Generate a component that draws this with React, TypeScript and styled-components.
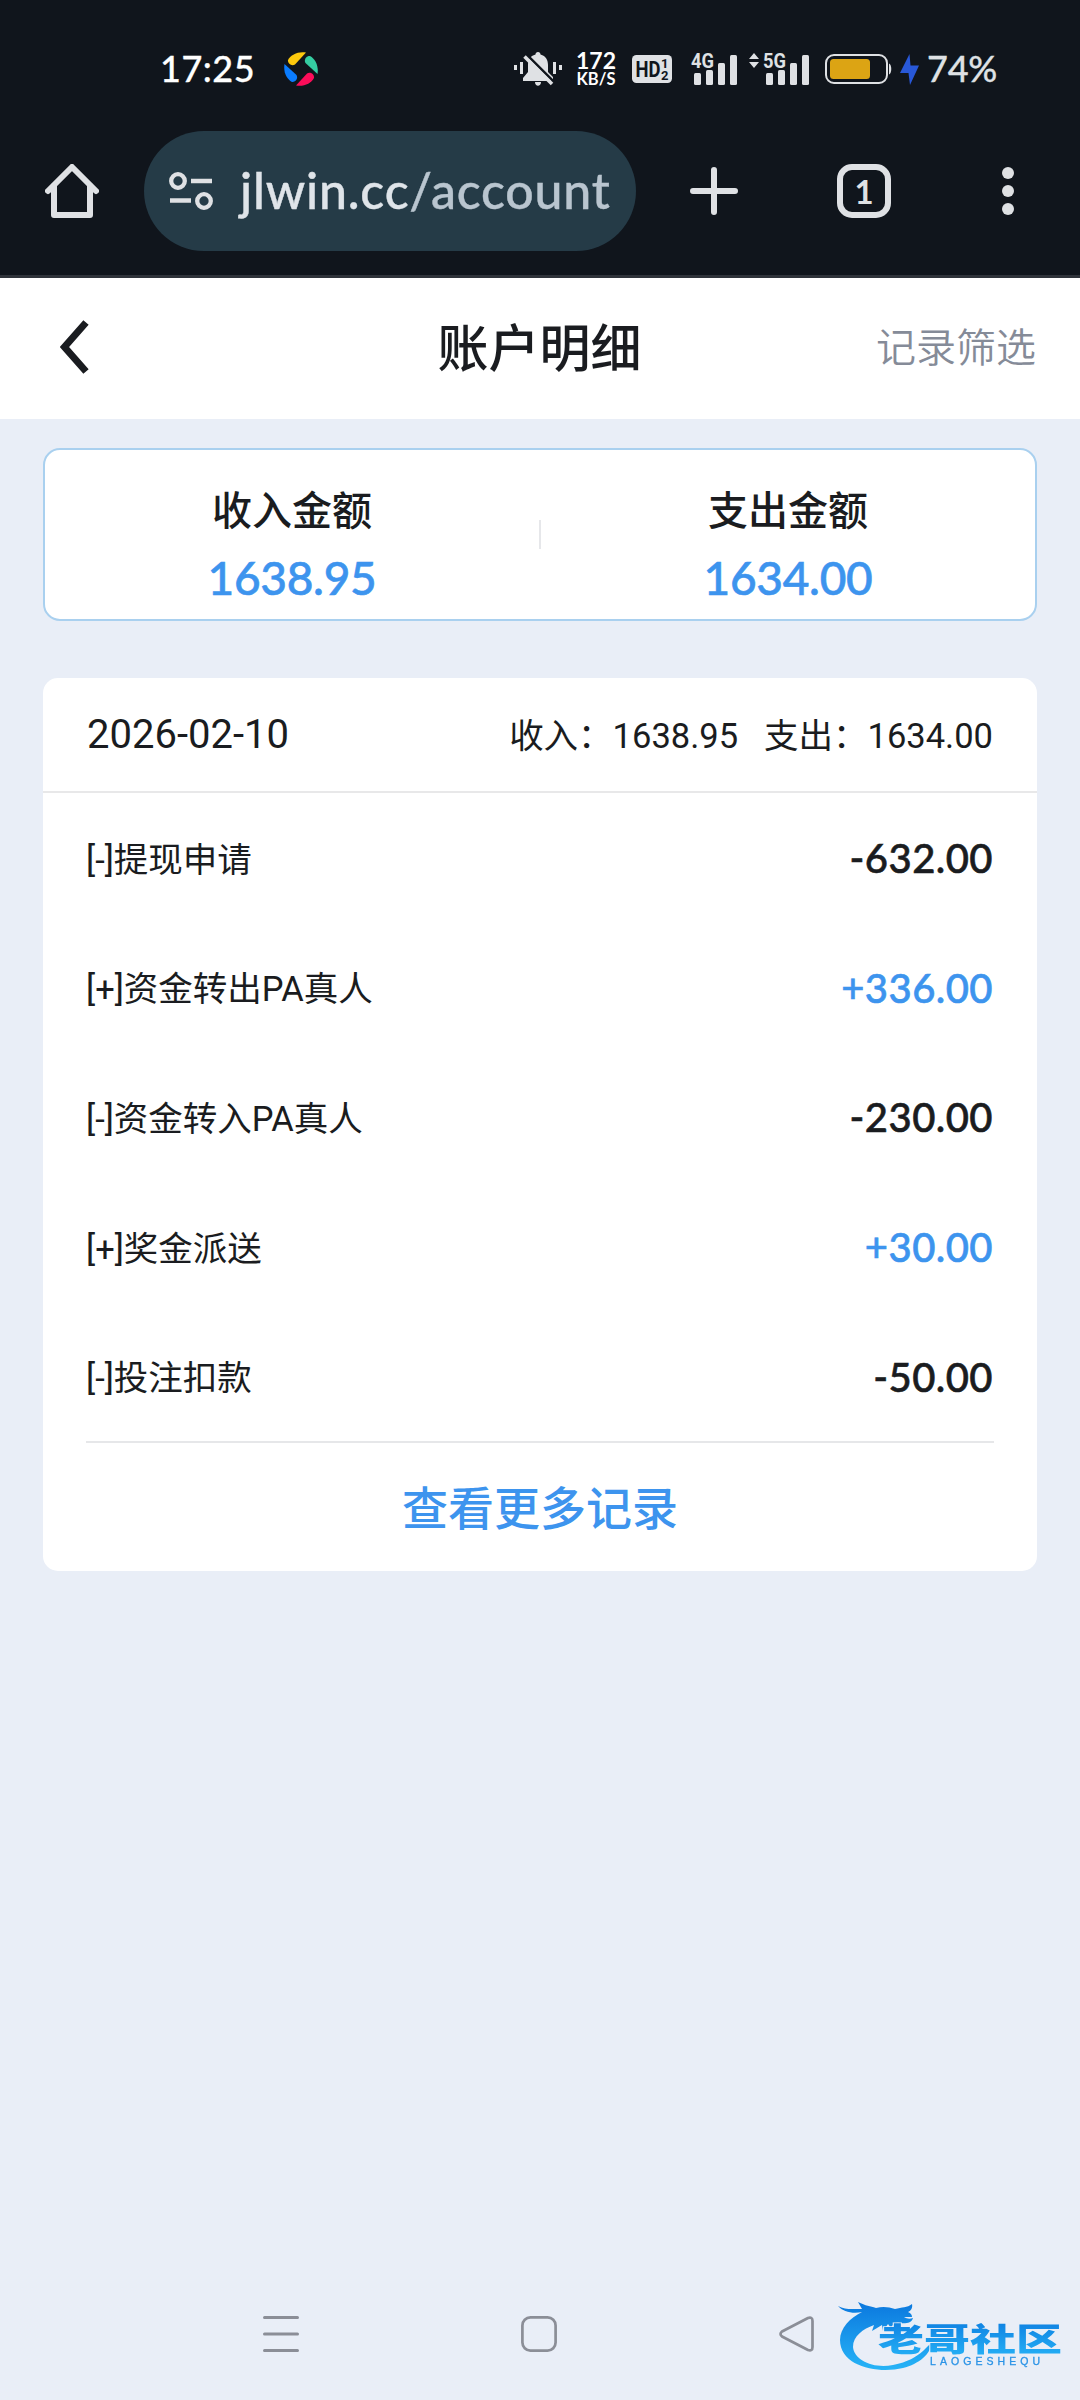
import React from "react";
import styled, { createGlobalStyle } from "styled-components";

const latin = `Lato, "Noto Sans CJK SC", sans-serif`;
const body = `Roboto, "Noto Sans CJK SC", sans-serif`;
const ink = "#1a1c20";
const blue = "#3d94ee";
const light = "#dfe1e4";

const GlobalStyle = createGlobalStyle`
  * { box-sizing: border-box; }
  body { margin: 0; background: #e9eef7; }
`;

const Screen = styled.div`
  position: relative;
  width: 1080px;
  height: 2400px;
  display: flex;
  flex-direction: column;
  background: #e9eef7;
  color: ${ink};
  font-family: ${body};
  overflow: hidden;
  white-space: nowrap;
`;

const BrowserChrome = styled.header`
  height: 278px;
  background: #10151c;
  border-bottom: 3px solid #2f333a;
  display: flex;
  flex-direction: column;
`;

const StatusBar = styled.div`
  height: 131px;
  padding: 7px 81px 0 160px;
  display: flex;
  align-items: center;
  color: ${light};
  font-family: ${latin};
`;

const Clock = styled.span`
  width: 124px;
  padding-bottom: 2px;
  font-size: 36px;
  font-weight: 500;
  letter-spacing: 0.5px;
  color: #fff;
  -webkit-text-stroke: 0.3px currentColor;
`;

const StatusIcons = styled.div`
  margin-left: auto;
  display: flex;
  align-items: center;
`;

const NetSpeed = styled.div`
  width: 40px;
  margin: 0 16px 0 14px;
  display: flex;
  flex-direction: column;
  align-items: center;
  color: #fff;
  font-weight: 700;
`;

const SpeedValue = styled.span`
  font-size: 23px;
  line-height: 20px;
`;

const SpeedUnit = styled.span`
  font-size: 16.5px;
  line-height: 18px;
`;

const Percent = styled.span`
  width: 72px;
  margin-left: 8px;
  padding-bottom: 2px;
  font-size: 36px;
  font-weight: 500;
  letter-spacing: -0.2px;
  -webkit-text-stroke: 0.3px currentColor;
`;

const Toolbar = styled.div`
  height: 120px;
  padding: 0 66px 0 45px;
  display: flex;
  align-items: center;
`;

const AddressPill = styled.div`
  width: 492px;
  height: 120px;
  margin: 0 54px 0 45px;
  padding-left: 24px;
  border-radius: 60px;
  background: #253b47;
  display: flex;
  align-items: center;
`;

const Url = styled.span`
  margin-left: 26px;
  padding-bottom: 2px;
  font-family: ${latin};
  font-size: 50px;
  font-weight: 500;
  letter-spacing: 0.8px;
  line-height: 60px;
  color: #dfe4e9;
  -webkit-text-stroke: 0.4px currentColor;
`;

const UrlPath = styled.span`
  color: #b9c5cf;
`;

const TabCount = styled.div`
  width: 54px;
  height: 54px;
  margin: 0 111px 0 99px;
  border: 6px solid ${light};
  border-radius: 15px;
  display: flex;
  align-items: center;
  justify-content: center;
  font: 700 33px/42px ${latin};
  color: ${light};
`;

const PageHeader = styled.div`
  height: 141px;
  padding: 0 44px 0 60px;
  background: #fff;
  display: grid;
  grid-template-columns: 1fr auto 1fr;
  align-items: center;
`;

const BackIcon = styled.svg`
  margin-bottom: 3px;
`;

const Title = styled.h1`
  margin: 2px 0 0 -17px;
  font-size: 51px;
  font-weight: 500;
  line-height: 60px;
`;

const FilterLink = styled.span`
  justify-self: end;
  font-size: 40px;
  font-weight: 350;
  line-height: 48px;
  color: #858b98;
`;

const Content = styled.main`
  flex: 1;
  padding: 29px 43px 0;
  display: flex;
  flex-direction: column;
  gap: 57px;
`;

const Summary = styled.section`
  height: 173px;
  border: 2px solid #a9d0ef;
  border-radius: 17px;
  background: #fff;
  display: grid;
  grid-template-columns: 1fr 2px 1fr;
  align-items: center;
`;

const Total = styled.div`
  height: 100%;
  padding-top: 32px;
  display: flex;
  flex-direction: column;
  align-items: center;
`;

const TotalLabel = styled.span`
  font-size: 40px;
  font-weight: 500;
  line-height: 60px;
`;

const TotalValue = styled.span`
  margin-top: 8px;
  font: 500 46px/56px ${latin};
  letter-spacing: -0.3px;
  color: ${blue};
  -webkit-text-stroke: 0.6px currentColor;
`;

const Divider = styled.i`
  width: 2px;
  height: 29px;
  background: #e6e7ea;
`;

const Records = styled.section`
  height: 893px;
  border-radius: 15px;
  background: #fff;
`;

const DayHeader = styled.div`
  height: 115px;
  padding: 0 43px 0 44px;
  border-bottom: 2px solid #e8e8e9;
  display: flex;
  align-items: center;
  justify-content: space-between;
  font-size: 40px;
`;

const DayTotals = styled.div`
  padding: 0 1px 4px 0;
  display: flex;
  gap: 26px;
  font-size: 34.5px;
`;

const RecordList = styled.div`
  margin: 0 43px;
  border-bottom: 2px solid #e6e7e9;
`;

const Record = styled.div`
  height: 129.6px;
  padding-right: 1px;
  display: flex;
  align-items: center;
  justify-content: space-between;
  font-size: 34.5px;
`;

const RecordLabel = styled.span`
  padding-bottom: 2px;
`;

const Amount = styled.span<{ $income: boolean }>`
  padding-top: 1px;
  font: 500 40px/48px ${latin};
  letter-spacing: 0.45px;
  color: ${(p) => (p.$income ? blue : ink)};
  -webkit-text-stroke: 0.6px currentColor;
`;

const More = styled.div`
  height: 128px;
  padding-bottom: 4px;
  display: flex;
  align-items: center;
  justify-content: center;
  font-size: 46px;
  font-weight: 500;
  color: ${blue};
`;

const SystemNav = styled.nav`
  height: 132px;
  padding: 0 266px 0 263px;
  display: flex;
  align-items: center;
  justify-content: space-between;
`;

const Watermark = styled.svg`
  position: absolute;
  left: 832px;
  top: 2292px;
  filter: blur(0.6px);
`;

const records = [
  { label: "[-]提现申请", amount: "-632.00" },
  { label: "[+]资金转出PA真人", amount: "+336.00" },
  { label: "[-]资金转入PA真人", amount: "-230.00" },
  { label: "[+]奖金派送", amount: "+30.00" },
  { label: "[-]投注扣款", amount: "-50.00" },
];

const AppBadge = () => (
  <svg width="34" height="34" viewBox="0 0 34 34">
    <path d="M22 .5C14-.8 7 2.500 4 8c-.5 3.500 3.500 6.500 7 4.500Z" fill="#fdc90d" />
    <path d="M33.500 22C34.800 14 31.500 7 26 4c-3.500-.5-6.500 3.500-4.500 7Z" fill="#35cda2" />
    <path d="M12 33.500C20 34.800 27 31.500 30 26c.5-3.500-3.500-6.500-7-4.500Z" fill="#fb0d59" />
    <path d="M.5 12C-.8 20 2.500 27 8 30c3.500.5 6.500-3.500 4.500-7Z" fill="#0a7cff" />
  </svg>
);

const MutedBell = () => (
  <svg width="48" height="34" viewBox="0 0 48 34" fill={light}>
    <path d="M0 13h3v5H0zM6 10h3v12H6zM39 10h3v12h-3zM45 13h3v5h-3z" />
    <path d="M24 0c1.500 0 2.500 1 2.500 2.500C32 4 34 8 34 13v7l5 5v4H9v-3l5-6v-7c0-5 2-9 7.500-10.500C21.500 1 22.500 0 24 0ZM21 30h6c0 5-6 5-6 0Z" />
    <path d="M12.500 2.500 40 30" stroke="#10151c" strokeWidth="2.500" />
    <path d="M10.500 4.500 38 32" stroke={light} strokeWidth="3.500" />
  </svg>
);

const HdBadge = () => (
  <svg width="40" height="28" viewBox="0 0 40 28">
    <rect width="40" height="28" rx="4.500" fill={light} />
    <g fill="#10151c" fontFamily="Roboto, sans-serif" fontWeight="700">
      <text x="3.500" y="22" fontSize="22" textLength="25" lengthAdjust="spacingAndGlyphs">HD</text>
      <text x="29" y="13" fontSize="13">1</text>
      <text x="29" y="25" fontSize="13">2</text>
    </g>
  </svg>
);

const SignalIcon = styled.svg`
  overflow: visible;
`;

const Signal = ({ label, arrows }: { label: string; arrows?: boolean }) => (
  <SignalIcon width={arrows ? 60 : 46} height="38" viewBox={arrows ? "-14 -2 60 38" : "0 -2 46 38"} fill={light}>
    {arrows && <path d="m-14 7 5-6 5 6ZM-14 10h10l-5 6Z" />}
    <text x="0" y="16" fontFamily="Roboto, sans-serif" fontWeight="700" fontSize="21" textLength="23" lengthAdjust="spacingAndGlyphs">
      {label}
    </text>
    <rect x="3" y="21" width="7" height="12" rx="1.500" />
    <rect x="15" y="18" width="7" height="15" rx="1.500" />
    <rect x="27" y="11" width="7" height="22" rx="1.500" />
    <rect x="39" y="3" width="7" height="30" rx="1.500" />
  </SignalIcon>
);

const Battery = () => (
  <svg width="67" height="30" viewBox="0 0 67 30">
    <rect x="1" y="1" width="61" height="28" rx="8" fill="none" stroke={light} strokeWidth="2" />
    <rect x="5" y="5" width="40" height="20" rx="3.500" fill="#dca414" />
    <path d="M64 9.500c3 1 3 10 0 11Z" fill={light} />
  </svg>
);

const Bolt = () => (
  <svg width="19" height="31" viewBox="0 0 19 31" fill="#2858d8">
    <path d="M9.500 0 0 19h8.500L10 31l9-19.500h-8.500Z" />
  </svg>
);

const Home = () => (
  <svg width="54" height="54" viewBox="0 0 54 54" fill="none" stroke={light} strokeWidth="6" strokeLinejoin="round" strokeLinecap="round">
    <path d="M3 27 27 3l24 24" />
    <path d="M9 22v29h36V22" />
  </svg>
);

const SiteSettings = () => (
  <svg width="46" height="38" viewBox="0 0 46 38" fill="none" stroke={light}>
    <circle cx="10" cy="9" r="6.800" strokeWidth="4.300" />
    <circle cx="36" cy="29" r="6.800" strokeWidth="4.300" />
    <path d="M23 9h21M2 28.500h21" strokeWidth="4.500" />
  </svg>
);

export default function App() {
  return (
    <Screen>
      <GlobalStyle />
      <BrowserChrome>
        <StatusBar>
          <Clock>17:25</Clock>
          <AppBadge />
          <StatusIcons>
            <MutedBell />
            <NetSpeed>
              <SpeedValue>172</SpeedValue>
              <SpeedUnit>KB/S</SpeedUnit>
            </NetSpeed>
            <HdBadge />
            <svg width="19" height="1" />
            <Signal label="4G" />
            <svg width="12" height="1" />
            <Signal label="5G" arrows />
            <svg width="16" height="1" />
            <Battery />
            <svg width="8" height="1" />
            <Bolt />
            <Percent>74%</Percent>
          </StatusIcons>
        </StatusBar>
        <Toolbar>
          <Home />
          <AddressPill>
            <SiteSettings />
            <Url>
              jlwin.cc<UrlPath>/account</UrlPath>
            </Url>
          </AddressPill>
          <svg width="48" height="48" viewBox="0 0 48 48" stroke={light} strokeWidth="6" strokeLinecap="round">
            <path d="M24 3v42M3 24h42" />
          </svg>
          <TabCount>1</TabCount>
          <svg width="12" height="48" viewBox="0 0 12 48" fill={light}>
            <circle cx="6" cy="6" r="6" />
            <circle cx="6" cy="24" r="6" />
            <circle cx="6" cy="42" r="6" />
          </svg>
        </Toolbar>
      </BrowserChrome>

      <PageHeader>
        <BackIcon width="29" height="54" viewBox="0 0 29 54" fill="none" stroke={ink} strokeWidth="7">
          <path d="M26 2.500 4.500 27 26 51.500" />
        </BackIcon>
        <Title>账户明细</Title>
        <FilterLink>记录筛选</FilterLink>
      </PageHeader>

      <Content>
        <Summary>
          <Total>
            <TotalLabel>收入金额</TotalLabel>
            <TotalValue>1638.95</TotalValue>
          </Total>
          <Divider />
          <Total>
            <TotalLabel>支出金额</TotalLabel>
            <TotalValue>1634.00</TotalValue>
          </Total>
        </Summary>

        <Records>
          <DayHeader>
            <span>2026-02-10</span>
            <DayTotals>
              <span>收入：1638.95</span>
              <span>支出：1634.00</span>
            </DayTotals>
          </DayHeader>
          <RecordList>
            {records.map((r) => (
              <Record key={r.label}>
                <RecordLabel>{r.label}</RecordLabel>
                <Amount $income={r.amount.startsWith("+")}>{r.amount}</Amount>
              </Record>
            ))}
          </RecordList>
          <More>查看更多记录</More>
        </Records>
      </Content>

      <SystemNav>
        <svg width="36" height="36" viewBox="0 0 36 36" stroke="#8b8e97" strokeWidth="3" strokeLinecap="round">
          <path d="M1.500 1.500h33M1.500 18h33M1.500 34.500h33" />
        </svg>
        <svg width="36" height="36" viewBox="0 0 36 36" fill="none" stroke="#8b8e97" strokeWidth="2.700">
          <rect x="1.400" y="1.400" width="33.200" height="33.200" rx="8" />
        </svg>
        <svg width="35" height="36" viewBox="0 0 35 36" fill="none" stroke="#8b8e97" strokeWidth="2.700" strokeLinejoin="round">
          <path d="M29 2 3 15.500q-3 2.500 0 5L29 34q4.500 1.500 4.500-3V5q0-4.500-4.500-3Z" />
        </svg>
      </SystemNav>

      <Watermark width="240" height="90" viewBox="0 0 240 90">
        <defs>
          <linearGradient id="sea" x1="0" y1="0" x2="0" y2="1">
            <stop offset="0" stopColor="#0b78de" />
            <stop offset="1" stopColor="#27b4f7" />
          </linearGradient>
        </defs>
        <path
          d="M6 14c7 4 13 3 24 3l-4-7c8 4 12 4 18 6 7-2 13-1 19 1 7-2 12-1 17-5 1 5-2 7-4 8 3 1 4 3 4 5h-8c3 2 6 2 9 1-1 5-8 6-13 5-5-1-7 1-9 5l-3-4-5 7-1-6-10 6 2-6C31 37 21 44 21 55c1 13 20 22 40 18 15-3 23-8 30-14l9-9c-1 12-13 22-29 26-24 6-63-1-63-28C8 36 18 26 30 20c-9 2-19 0-24-6Z"
          fill="url(#sea)"
        />
        <text x="46" y="59" fontFamily="Noto Sans CJK SC, sans-serif" fontWeight="900" fontSize="32" textLength="184" lengthAdjust="spacingAndGlyphs" fill="url(#sea)" stroke="#e9eef7" strokeWidth="1.500" paintOrder="stroke">
          老哥社区
        </text>
        <text x="98" y="72.500" fontFamily="Liberation Sans, sans-serif" fontSize="10.500" textLength="110" fill="#2a93e6" stroke="#2a93e6" strokeWidth="0.300">
          LAOGESHEQU
        </text>
      </Watermark>
    </Screen>
  );
}
